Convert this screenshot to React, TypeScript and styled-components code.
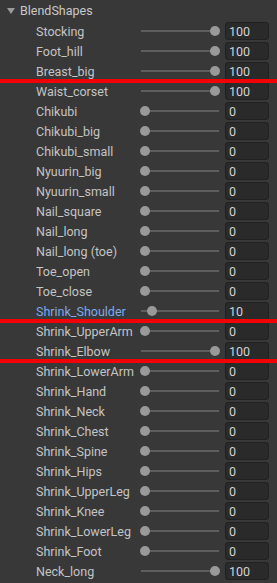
import React from "react";
import styled, { createGlobalStyle } from "styled-components";

const Global = createGlobalStyle`
  html, body { margin: 0; padding: 0; background: #383838; }
  body { font-family: Roboto, "Noto Sans", "Liberation Sans", sans-serif; }
`;

const Panel = styled.div`
  width: 277px;
  height: 583px;
  background: #383838;
  display: flex;
  flex-direction: column;
  overflow: hidden;
`;

const Header = styled.div`
  height: 21px;
  display: flex;
  align-items: center;
  gap: 5px;
  padding-left: 7px;
  color: #c8c8c8;
  font-size: 12.5px;
`;

const Triangle = styled.span`
  width: 0;
  height: 0;
  border-left: 4px solid transparent;
  border-right: 4px solid transparent;
  border-top: 6px solid #9a9a9a;
  margin-top: 1px;
`;

const Row = styled.div<{ $marked?: boolean }>`
  position: relative;
  height: 20px;
  display: grid;
  grid-template-columns: 105px 78px 50px;
  align-items: center;
  padding-left: 36px;
  &::after {
    content: "";
    display: ${(p) => (p.$marked ? "block" : "none")};
    position: absolute;
    left: 0;
    right: 0;
    bottom: -2px;
    height: 4px;
    background: #f00000;
    z-index: 2;
  }
`;

const Label = styled.span<{ $active?: boolean }>`
  font-size: 12.5px;
  color: ${(p) => (p.$active ? "#7fa9ec" : "#c4c4c4")};
  white-space: nowrap;
  overflow: hidden;
`;

const Slider = styled.div`
  position: relative;
  height: 20px;
  display: flex;
  align-items: center;
`;

const Track = styled.div`
  width: 100%;
  height: 2px;
  background: #5e5e5e;
`;

const Knob = styled.div`
  position: absolute;
  top: 5px;
  width: 10px;
  height: 10px;
  margin-left: -5px;
  border-radius: 50%;
  background: #999999;
`;

const Field = styled.div`
  margin-left: 6px;
  height: 18px;
  box-sizing: border-box;
  border: 1px solid #212121;
  border-radius: 3px;
  background: #2a2a2a;
  color: #d2d2d2;
  font-size: 12.5px;
  display: flex;
  align-items: center;
  padding-left: 3px;
`;

type Item = { name: string; value: number; marked?: boolean; active?: boolean };

const items: Item[] = [
  { name: "Stocking", value: 100 },
  { name: "Foot_hill", value: 100 },
  { name: "Breast_big", value: 100, marked: true },
  { name: "Waist_corset", value: 100 },
  { name: "Chikubi", value: 0 },
  { name: "Chikubi_big", value: 0 },
  { name: "Chikubi_small", value: 0 },
  { name: "Nyuurin_big", value: 0 },
  { name: "Nyuurin_small", value: 0 },
  { name: "Nail_square", value: 0 },
  { name: "Nail_long", value: 0 },
  { name: "Nail_long (toe)", value: 0 },
  { name: "Toe_open", value: 0 },
  { name: "Toe_close", value: 0 },
  { name: "Shrink_Shoulder", value: 10, marked: true, active: true },
  { name: "Shrink_UpperArm", value: 0 },
  { name: "Shrink_Elbow", value: 100, marked: true },
  { name: "Shrink_LowerArm", value: 0 },
  { name: "Shrink_Hand", value: 0 },
  { name: "Shrink_Neck", value: 0 },
  { name: "Shrink_Chest", value: 0 },
  { name: "Shrink_Spine", value: 0 },
  { name: "Shrink_Hips", value: 0 },
  { name: "Shrink_UpperLeg", value: 0 },
  { name: "Shrink_Knee", value: 0 },
  { name: "Shrink_LowerLeg", value: 0 },
  { name: "Shrink_Foot", value: 0 },
  { name: "Neck_long", value: 100 },
];

export default function App() {
  return (
    <>
      <Global />
      <Panel>
        <Header>
          <Triangle />
          <span>BlendShapes</span>
        </Header>
        {items.map((it) => (
          <Row key={it.name} $marked={it.marked}>
            <Label $active={it.active}>{it.name}</Label>
            <Slider>
              <Track />
              <Knob style={{ left: `${4 + (it.value / 100) * 70}px` }} />
            </Slider>
            <Field>{it.value}</Field>
          </Row>
        ))}
      </Panel>
    </>
  );
}
